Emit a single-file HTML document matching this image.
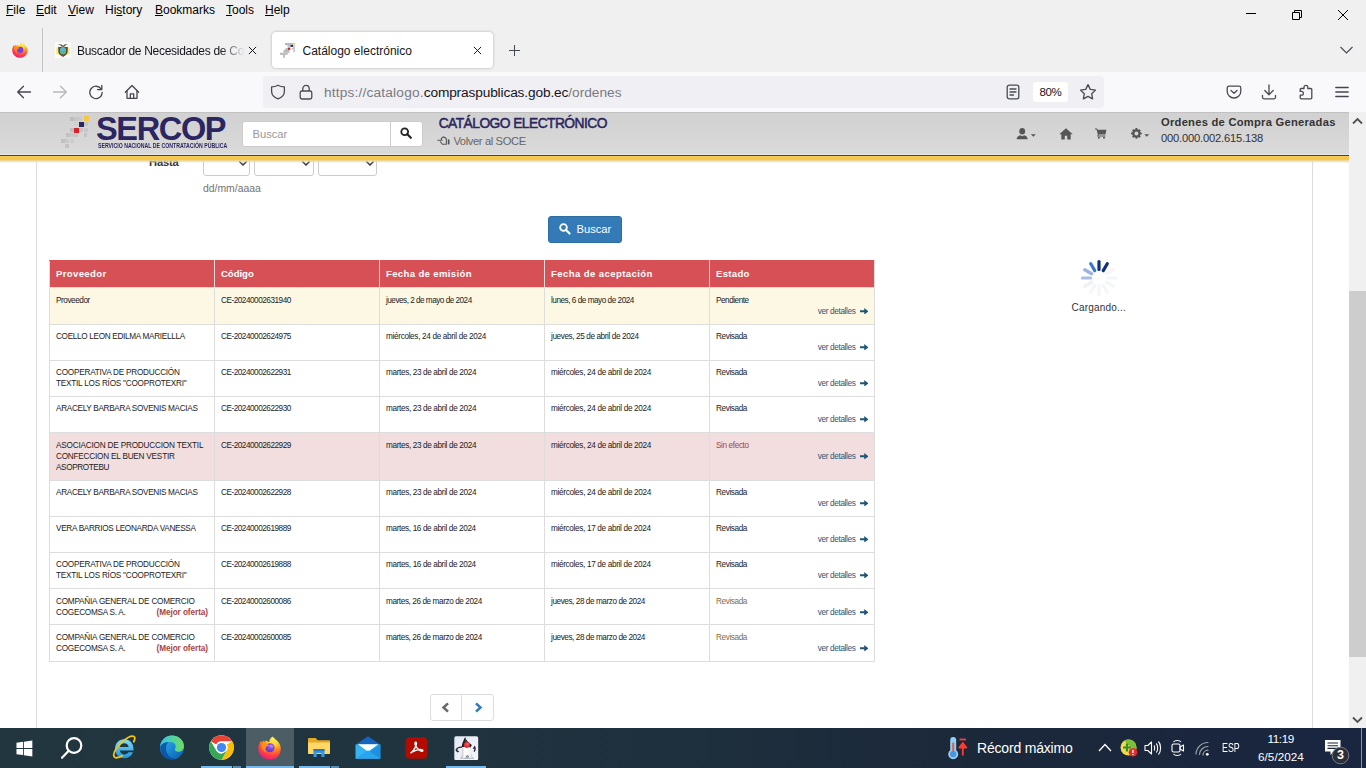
<!DOCTYPE html>
<html lang="es">
<head>
<meta charset="utf-8">
<title>Catálogo electrónico</title>
<style>
*{box-sizing:border-box;margin:0;padding:0}
html,body{width:1366px;height:768px;overflow:hidden;background:#fff;font-family:"Liberation Sans",Arial,sans-serif}
.abs{position:absolute}
#screen{position:relative;width:1366px;height:768px;overflow:hidden;background:#fff}
/* ---------- browser chrome ---------- */
#chrome-top{left:0;top:0;width:1366px;height:72px;background:#f0f0f1}
#menubar span{position:absolute;top:3.400px;font:12px "Liberation Sans",sans-serif;color:#000;white-space:nowrap}
#menubar u{text-decoration:underline;text-underline-offset:1px}
#navbar{left:0;top:72px;width:1366px;height:40px;background:#f9f9fb}
#urlbar{left:263px;top:76px;width:841px;height:32px;background:#f0f0f4;border-radius:4px}
.tabtxt{font:12px "Liberation Sans",sans-serif;color:#15141a;white-space:nowrap}
/* ---------- page ---------- */
#page{left:0;top:112px;width:1349px;height:616px;background:#fff;overflow:hidden}
#hdr{left:0;top:0;width:1349px;height:43px;background:linear-gradient(#d1d1d1,#dadada);border-top:1px solid #c2c2c2;border-bottom:1px solid #e6e7ea}
#hdrline{left:0;top:43px;width:1349px;height:1px;background:#4a4322}
#hdryel{left:0;top:44px;width:1349px;height:4px;background:linear-gradient(#f8d060,#f5c444 40%,#f6c84e)}
#hdrsh{left:0;top:48px;width:1349px;height:3px;background:linear-gradient(rgba(236,208,128,1),rgba(228,216,178,.7) 50%,rgba(255,255,255,0))}
#panel{left:36px;top:49px;width:1277px;height:570px;border-left:1px solid #ddd;border-right:1px solid #ddd;background:#fff}
/* table */
#tbl{left:49px;top:148px;width:825px;border-collapse:collapse;table-layout:fixed;font-size:8.200px;color:#222}
#tbl th{background:#d65056;color:#fff;font-size:9.6px;font-weight:bold;text-align:left;padding:0 0 2px 6px;height:27px;border:1px solid #ddd;border-top-color:#d65056}
#tbl td{vertical-align:top;padding:7.300px 6px 0 6px;border:1px solid #ddd;line-height:11px;position:relative}
#tbl tr.y td{background:#fcf8e3}
#tbl tr.p td{background:#f2dede}
#tbl tr.k td{padding-top:6.300px}
#tbl tr.k .vd{top:17px}
.vd{position:absolute;right:6px;top:18px;color:#2a567a;font-size:8.200px;white-space:nowrap}
.mo{color:#a94442;font-weight:bold;float:right;letter-spacing:-.06px}
.ar{margin-left:4px;vertical-align:-.4px}
.sel{top:30px;height:34px;border:1px solid #ccc;border-radius:3px;background:#fff}
/* scrollbar */
#sb{left:1349px;top:112px;width:17px;height:616px;background:#f0f0f0}
#sbthumb{left:1349px;top:291px;width:17px;height:366px;background:#cdcdcd}
/* taskbar */
#taskbar{left:0;top:728px;width:1366px;height:40px;background:linear-gradient(to right,#22363f 0,#20343f 30%,#1e2f3d 50%,#1b283a 72%,#1a2540 100%)}
.ul{top:766px;height:2px;background:#76b9ed}
.ul2{top:766px;height:2px;background:#5c8db5}
</style>
</head>
<body>
<div id="screen">
<!--CHROME-->
<div id="chrome-top" class="abs"></div>
<div id="menubar">
<span style="left:6px"><u>F</u>ile</span>
<span style="left:36px"><u>E</u>dit</span>
<span style="left:68px"><u>V</u>iew</span>
<span style="left:105px">Hi<u>s</u>tory</span>
<span style="left:155px"><u>B</u>ookmarks</span>
<span style="left:226px"><u>T</u>ools</span>
<span style="left:265px"><u>H</u>elp</span>
</div>

<!-- window controls -->
<svg class="abs" style="left:1240px;top:4px" width="120" height="22" viewBox="0 0 120 22" fill="none" stroke="#000" stroke-width="1">
 <path d="M6 9.5h10"/>
 <path d="M52.5 8.500h7v7h-7z"/><path d="M54.5 8.500v-2h7v7h-2"/>
 <path d="M98 6l10 10M108 6l-10 10"/>
</svg>
<!-- firefox view -->
<svg class="abs" style="left:12px;top:42px" width="16" height="16" viewBox="0 0 24 24">
 <defs><radialGradient id="ffg" cx="68%" cy="8%" r="100%"><stop offset="0" stop-color="#fff45a"/><stop offset=".28" stop-color="#ffd12f"/><stop offset=".5" stop-color="#ff8a1e"/><stop offset=".75" stop-color="#ff3d45"/><stop offset="1" stop-color="#e8178a"/></radialGradient></defs>
 <path d="M15 .3c1.500 2.200 4.500 3.700 6.500 6.700 2 3 2.300 6.500 1 10C20.800 21.300 16.800 23.800 12 23.800 5.500 23.800.3 18.800.3 12.500c0-3 1.200-6 3-7.900.2.700.6 1.300 1.100 1.800.2-.9.600-1.600 1.200-2.100.4.700 1 1.300 1.800 1.600-.1-.9.100-1.500.5-1.900.9.800 2.300 1.600 3.600 1.800C11.500 3.500 13 1.500 15 .3z" fill="url(#ffg)"/>
 <circle cx="12.300" cy="11.800" r="4.800" fill="#7a3ee6"/>
 <path d="M3.600 6.600c2.600-.8 5.900.3 8 3.400-1.800-.4-3.400.4-4.100 1.900-.7 1.600-.2 3.300 1 4.400-3.400-.6-5.500-4.600-4.900-9.700z" fill="#ff8f1a"/>
</svg>
<div class="abs" style="left:42px;top:28px;width:1px;height:44px;background:#c4c4c8"></div>
<!-- tab 1 -->
<svg class="abs" style="left:55px;top:42px" width="16" height="16" viewBox="0 0 16 16">
 <rect width="16" height="16" fill="#fbfbf9"/>
 <path d="M1.200 5.500h3v7h-3zM11.800 5.500h3v7h-3z" fill="#f6e96a" opacity=".85"/>
 <path d="M8 3.800C6.800 2.300 4.800 1.600 2.800 2c1.700.4 2.900 1.200 3.600 2.300zM8 3.800c1.200-1.500 3.200-2.200 5.200-1.800-1.700.4-2.900 1.200-3.600 2.300z" fill="#4a4a40"/>
 <path d="M3.300 4.800c1.500.5 3 .3 4.700-.8 1.700 1.100 3.200 1.300 4.700.8v4.700c0 2.300-1.900 4-4.700 5.300-2.800-1.300-4.700-3-4.700-5.300z" fill="#5b4630"/>
 <ellipse cx="8" cy="8.600" rx="3.100" ry="3.500" fill="#59b7c9"/>
 <path d="M4.900 9a3.100 3.500 0 0 0 6.200 0z" fill="#5fb58a"/>
 <path d="M6.800 13.300L8 15l1.200-1.700z" fill="#c8382e"/>
</svg>
<div class="abs tabtxt" id="t1txt" style="letter-spacing:-.29px;left:77px;top:43.700px;width:168px;height:17px;overflow:hidden;-webkit-mask-image:linear-gradient(to right,#000 0,#000 143px,transparent 168px);mask-image:linear-gradient(to right,#000 0,#000 143px,transparent 168px)">Buscador de Necesidades de Co</div>
<svg class="abs" style="left:248px;top:46px" width="9" height="9" viewBox="0 0 10 10" stroke="#15141a" stroke-width="1.100" fill="none"><path d="M1 1l8 8M9 1l-8 8"/></svg>
<!-- tab 2 active -->
<div class="abs" style="left:272px;top:32px;width:221px;height:36px;background:#fff;border-radius:4px;box-shadow:0 0 3px rgba(0,0,0,.28)"></div>
<svg class="abs" style="left:280px;top:42px" width="16" height="16" viewBox="0 0 16 16">
 <rect x="5" y="1" width="8" height="2.200" fill="#b7b7b9"/><rect x="13" y="1" width="2.200" height="2.600" fill="#e2dc93"/>
 <rect x="7.500" y="3" width="3" height="2.800" fill="#c4c4c6"/><rect x="10.500" y="3" width="2.600" height="1.900" fill="#2b2560"/><rect x="13" y="3.500" width="2" height="2.500" fill="#c9c9cb"/>
 <rect x="11.500" y="5.800" width="3.500" height="1.800" fill="#c6c6c8"/><rect x="13.200" y="7.500" width="1.800" height="2.700" fill="#c8c8ca"/>
 <rect x="8" y="5.800" width="2.200" height="2.200" fill="#d8232a"/><rect x="5.500" y="6" width="2.500" height="2" fill="#bdbdbf"/>
 <rect x="3.500" y="7.800" width="6" height="3" fill="#b9b9bb"/><rect x="0" y="10.800" width="7.600" height="2.100" fill="#bcbcbe"/><rect x="3" y="12.900" width="2.100" height="2.900" fill="#c0c0c2"/>
</svg>
<div class="abs tabtxt" id="t2txt" style="left:302.500px;top:43.700px">Catálogo electrónico</div>
<svg class="abs" style="left:472.500px;top:46px" width="9" height="9" viewBox="0 0 10 10" stroke="#15141a" stroke-width="1.100" fill="none"><path d="M1 1l8 8M9 1l-8 8"/></svg>
<svg class="abs" style="left:508px;top:44px" width="13" height="13" viewBox="0 0 13 13" stroke="#4a4a52" stroke-width="1.050" fill="none"><path d="M6.500 1v11M1 6.500h11"/></svg>
<svg class="abs" style="left:1339px;top:45px" width="15" height="10" viewBox="0 0 15 10" stroke="#4a4a52" stroke-width="1.150" fill="none"><path d="M1.500 2l6 6 6-6"/></svg>

<!--NAV-->

<div id="navbar" class="abs"></div>
<div id="urlbar" class="abs"></div>
<!-- back fwd reload home -->
<svg class="abs" style="left:16px;top:84px" width="16" height="16" viewBox="0 0 16 16" stroke="#45454d" stroke-width="1.300" fill="none" stroke-linecap="round" stroke-linejoin="round"><path d="M14.500 8H1.800M7.500 2.200L1.700 8l5.800 5.800"/></svg>
<svg class="abs" style="left:52px;top:84px" width="16" height="16" viewBox="0 0 16 16" stroke="#b9b9bd" stroke-width="1.400" fill="none" stroke-linecap="round" stroke-linejoin="round"><path d="M1.500 8h12.700M8.500 2.200L14.300 8l-5.800 5.800"/></svg>
<svg class="abs" style="left:88px;top:84px" width="16" height="16" viewBox="0 0 16 16" stroke="#45454d" stroke-width="1.300" fill="none" stroke-linecap="round" stroke-linejoin="round"><path d="M13.300 5.200A6.200 6.200 0 1 0 14.200 8.500"/><path d="M13.800 1.300v4.300H9.500" /></svg>
<svg class="abs" style="left:124px;top:84px" width="16" height="16" viewBox="0 0 16 16" stroke="#45454d" stroke-width="1.300" fill="none" stroke-linecap="round" stroke-linejoin="round"><path d="M1.300 8.200L8 1.500l6.700 6.700"/><path d="M3 7v7.300h10V7"/><path d="M6.300 14.300V9.800h3.400v4.500"/></svg>
<!-- shield lock -->
<svg class="abs" style="left:270px;top:84px" width="16" height="16" viewBox="0 0 16 16" stroke="#4a4a52" stroke-width="1.300" fill="none" stroke-linejoin="round"><path d="M8 1.200C6 2.300 3.800 2.800 1.600 2.800v4.400c0 3.500 2.600 6.300 6.400 7.600 3.800-1.300 6.400-4.100 6.400-7.600V2.800C12.200 2.800 10 2.300 8 1.200z"/></svg>
<svg class="abs" style="left:298px;top:84px" width="16" height="16" viewBox="0 0 16 16" stroke="#4a4a52" stroke-width="1.300" fill="none" stroke-linejoin="round"><rect x="2.200" y="7" width="11.600" height="8" rx="1.800"/><path d="M4.800 7V4.600a3.200 3.200 0 0 1 6.400 0V7"/></svg>
<div class="abs" id="urltxt" style="left:324px;top:85.300px;font:13.700px 'Liberation Sans',sans-serif;color:#7a7a82;white-space:nowrap;letter-spacing:0"><span style="letter-spacing:.18px">https://catalogo.</span><span style="color:#15141a;letter-spacing:-.14px">compraspublicas.gob.ec</span>/ordenes</div>
<!-- reader, zoom, star -->
<svg class="abs" style="left:1005px;top:84px" width="16" height="16" viewBox="0 0 16 16" stroke="#4a4a52" stroke-width="1.300" fill="none" stroke-linecap="round"><rect x="2.200" y="1.200" width="11.600" height="13.600" rx="2"/><path d="M5 5h6M5 8h6M5 11h3.500"/></svg>
<div class="abs" style="left:1033px;top:82px;width:35px;height:20px;background:#fff;border-radius:3px;font:11.500px 'Liberation Sans',sans-serif;color:#15141a;text-align:center;line-height:21px;letter-spacing:-.34px">80%</div>
<svg class="abs" style="left:1079px;top:83px" width="18" height="18" viewBox="0 0 18 18" stroke="#4a4a52" stroke-width="1.300" fill="none" stroke-linejoin="round"><path d="M9 1.600l2.300 4.800 5.200.7-3.800 3.600.9 5.200L9 13.400l-4.600 2.500.9-5.200L1.500 7.100l5.200-.7z"/></svg>
<!-- pocket, download, ext, menu -->
<svg class="abs" style="left:1226px;top:84px" width="16" height="16" viewBox="0 0 16 16" stroke="#4a4a52" stroke-width="1.300" fill="none" stroke-linecap="round" stroke-linejoin="round"><path d="M3 2.200h10a1.800 1.800 0 0 1 1.800 1.800v3.200a6.800 6.800 0 0 1-13.600 0V4A1.800 1.800 0 0 1 3 2.200z"/><path d="M5 6.500l3 2.800 3-2.800"/></svg>
<svg class="abs" style="left:1261px;top:84px" width="16" height="16" viewBox="0 0 16 16" stroke="#4a4a52" stroke-width="1.300" fill="none" stroke-linecap="round" stroke-linejoin="round"><path d="M8 1v9.500M3.800 6.500L8 10.700l4.200-4.200"/><path d="M1.500 11.500v1.800a1.500 1.500 0 0 0 1.500 1.500h10a1.500 1.500 0 0 0 1.500-1.500v-1.800"/></svg>
<svg class="abs" style="left:1298px;top:84px" width="16" height="16" viewBox="0 0 16 16" stroke="#4a4a52" stroke-width="1.300" fill="none" stroke-linejoin="round"><path d="M6 3.200a1.900 1.900 0 0 1 3.800 0V4.500h3a1 1 0 0 1 1 1v8.300a1 1 0 0 1-1 1H3.200a1 1 0 0 1-1-1v-2.600h1.300a1.900 1.900 0 0 0 0-3.800H2.200V5.500a1 1 0 0 1 1-1H6z"/></svg>
<svg class="abs" style="left:1334px;top:84px" width="16" height="16" viewBox="0 0 16 16" stroke="#45454d" stroke-width="1.300" fill="none" stroke-linecap="round"><path d="M1.800 3.500h12.400M1.800 8h12.400M1.800 12.500h12.400"/></svg>

<!--PAGE-->
<div id="page" class="abs">
  <div id="panel" class="abs"></div>
  
<div class="abs" style="left:149px;top:44px;letter-spacing:-.17px;font:bold 11.200px 'Liberation Sans',sans-serif;color:#333">Hasta</div>
<div class="abs sel" style="left:203px;width:47px"></div>
<div class="abs sel" style="left:254px;width:60px"></div>
<div class="abs sel" style="left:318px;width:59px"></div>
<svg class="abs" style="left:237.5px;top:47.500px" width="10" height="7" viewBox="0 0 10 7" fill="none" stroke="#3a3a3a" stroke-width="1.500"><path d="M1.200 1.200L5 5l3.800-3.800"/></svg>
<svg class="abs" style="left:300.7px;top:47.500px" width="10" height="7" viewBox="0 0 10 7" fill="none" stroke="#3a3a3a" stroke-width="1.500"><path d="M1.200 1.200L5 5l3.800-3.800"/></svg>
<svg class="abs" style="left:364.5px;top:47.500px" width="10" height="7" viewBox="0 0 10 7" fill="none" stroke="#3a3a3a" stroke-width="1.500"><path d="M1.200 1.200L5 5l3.800-3.800"/></svg>
<div class="abs" style="left:203px;top:70.500px;font:10.400px 'Liberation Sans',sans-serif;color:#737373">dd/mm/aaaa</div>
<div class="abs" style="left:548px;top:104px;width:74px;height:27px;background:#337ab7;border:1px solid #2e6da4;border-radius:3px"></div>
<svg class="abs" style="left:559px;top:111px" width="11.500" height="11.500" viewBox="0 0 12 12" fill="none" stroke="#fff"><circle cx="4.700" cy="4.700" r="3.500" stroke-width="1.900"/><path d="M7.300 7.300l3.700 3.700" stroke-width="2.200" stroke-linecap="round"/></svg>
<div class="abs" style="left:576.500px;top:111px;font:11.200px 'Liberation Sans',sans-serif;color:#fff">Buscar</div>

  <table id="tbl" class="abs">
<colgroup><col style="width:165px"><col style="width:165px"><col style="width:165px"><col style="width:165px"><col style="width:165px"></colgroup>
<tr><th><span style="letter-spacing:0.337px">Proveedor</span></th><th><span style="letter-spacing:-0.058px">Código</span></th><th><span style="letter-spacing:0.337px">Fecha de emisión</span></th><th><span style="letter-spacing:0.386px">Fecha de aceptación</span></th><th><span style="letter-spacing:0.283px">Estado</span></th></tr>
<tr class="y" style="height:37px"><td><span style="letter-spacing:-0.431px">Proveedor</span></td><td><span style="letter-spacing:-0.474px">CE-20240002631940</span></td><td><span style="letter-spacing:-0.505px">jueves, 2 de mayo de 2024</span></td><td><span style="letter-spacing:-0.472px">lunes, 6 de mayo de 2024</span></td><td><span style="letter-spacing:-0.466px">Pendiente</span><span class="vd"><span style="letter-spacing:-0.348px">ver detalles</span><svg class="ar" width="8.500" height="6.600" viewBox="0 0 9 7"><path d="M0 2.400h4.500V0L9 3.500 4.500 7V4.600H0z" fill="#1f5575"/></svg></span></td></tr>
<tr class="k" style="height:36px"><td><span style="letter-spacing:-0.308px">COELLO LEON EDILMA MARIELLLA</span></td><td><span style="letter-spacing:-0.474px">CE-20240002624975</span></td><td><span style="letter-spacing:-0.323px">miércoles, 24 de abril de 2024</span></td><td><span style="letter-spacing:-0.394px">jueves, 25 de abril de 2024</span></td><td><span style="letter-spacing:-0.393px">Revisada</span><span class="vd"><span style="letter-spacing:-0.348px">ver detalles</span><svg class="ar" width="8.500" height="6.600" viewBox="0 0 9 7"><path d="M0 2.400h4.500V0L9 3.500 4.500 7V4.600H0z" fill="#1f5575"/></svg></span></td></tr>
<tr class="k" style="height:36px"><td><span style="letter-spacing:-0.226px">COOPERATIVA DE PRODUCCIÓN</span><br><span style="letter-spacing:-0.224px">TEXTIL LOS RÍOS "COOPROTEXRI"</span></td><td><span style="letter-spacing:-0.474px">CE-20240002622931</span></td><td><span style="letter-spacing:-0.355px">martes, 23 de abril de 2024</span></td><td><span style="letter-spacing:-0.323px">miércoles, 24 de abril de 2024</span></td><td><span style="letter-spacing:-0.393px">Revisada</span><span class="vd"><span style="letter-spacing:-0.348px">ver detalles</span><svg class="ar" width="8.500" height="6.600" viewBox="0 0 9 7"><path d="M0 2.400h4.500V0L9 3.500 4.500 7V4.600H0z" fill="#1f5575"/></svg></span></td></tr>
<tr class="k" style="height:36px"><td><span style="letter-spacing:-0.306px">ARACELY BARBARA SOVENIS MACIAS</span></td><td><span style="letter-spacing:-0.474px">CE-20240002622930</span></td><td><span style="letter-spacing:-0.355px">martes, 23 de abril de 2024</span></td><td><span style="letter-spacing:-0.323px">miércoles, 24 de abril de 2024</span></td><td><span style="letter-spacing:-0.393px">Revisada</span><span class="vd"><span style="letter-spacing:-0.348px">ver detalles</span><svg class="ar" width="8.500" height="6.600" viewBox="0 0 9 7"><path d="M0 2.400h4.500V0L9 3.500 4.500 7V4.600H0z" fill="#1f5575"/></svg></span></td></tr>
<tr class="p" style="height:48px"><td><span style="letter-spacing:-0.189px">ASOCIACION DE PRODUCCION TEXTIL</span><br><span style="letter-spacing:-0.208px">CONFECCION EL BUEN VESTIR</span><br><span style="letter-spacing:-0.388px">ASOPROTEBU</span></td><td><span style="letter-spacing:-0.474px">CE-20240002622929</span></td><td><span style="letter-spacing:-0.355px">martes, 23 de abril de 2024</span></td><td><span style="letter-spacing:-0.323px">miércoles, 24 de abril de 2024</span></td><td><span style="letter-spacing:-0.372px;color:#a94442">Sin efecto</span><span class="vd"><span style="letter-spacing:-0.348px">ver detalles</span><svg class="ar" width="8.500" height="6.600" viewBox="0 0 9 7"><path d="M0 2.400h4.500V0L9 3.500 4.500 7V4.600H0z" fill="#1f5575"/></svg></span></td></tr>
<tr class="k" style="height:36px"><td><span style="letter-spacing:-0.306px">ARACELY BARBARA SOVENIS MACIAS</span></td><td><span style="letter-spacing:-0.474px">CE-20240002622928</span></td><td><span style="letter-spacing:-0.355px">martes, 23 de abril de 2024</span></td><td><span style="letter-spacing:-0.323px">miércoles, 24 de abril de 2024</span></td><td><span style="letter-spacing:-0.393px">Revisada</span><span class="vd"><span style="letter-spacing:-0.348px">ver detalles</span><svg class="ar" width="8.500" height="6.600" viewBox="0 0 9 7"><path d="M0 2.400h4.500V0L9 3.500 4.500 7V4.600H0z" fill="#1f5575"/></svg></span></td></tr>
<tr class="k" style="height:36px"><td><span style="letter-spacing:-0.293px">VERA BARRIOS LEONARDA VANESSA</span></td><td><span style="letter-spacing:-0.474px">CE-20240002619889</span></td><td><span style="letter-spacing:-0.366px">martes, 16 de abril de 2024</span></td><td><span style="letter-spacing:-0.333px">miércoles, 17 de abril de 2024</span></td><td><span style="letter-spacing:-0.393px">Revisada</span><span class="vd"><span style="letter-spacing:-0.348px">ver detalles</span><svg class="ar" width="8.500" height="6.600" viewBox="0 0 9 7"><path d="M0 2.400h4.500V0L9 3.500 4.500 7V4.600H0z" fill="#1f5575"/></svg></span></td></tr>
<tr class="k" style="height:36px"><td><span style="letter-spacing:-0.226px">COOPERATIVA DE PRODUCCIÓN</span><br><span style="letter-spacing:-0.224px">TEXTIL LOS RÍOS "COOPROTEXRI"</span></td><td><span style="letter-spacing:-0.474px">CE-20240002619888</span></td><td><span style="letter-spacing:-0.366px">martes, 16 de abril de 2024</span></td><td><span style="letter-spacing:-0.333px">miércoles, 17 de abril de 2024</span></td><td><span style="letter-spacing:-0.393px">Revisada</span><span class="vd"><span style="letter-spacing:-0.348px">ver detalles</span><svg class="ar" width="8.500" height="6.600" viewBox="0 0 9 7"><path d="M0 2.400h4.500V0L9 3.500 4.500 7V4.600H0z" fill="#1f5575"/></svg></span></td></tr>
<tr class="" style="height:36px"><td><span style="letter-spacing:-0.213px">COMPAÑIA GENERAL DE COMERCIO</span><br><span style="letter-spacing:-0.244px">COGECOMSA S. A.</span> <span class="mo">(Mejor oferta)</span></td><td><span style="letter-spacing:-0.474px">CE-20240002600086</span></td><td><span style="letter-spacing:-0.41px">martes, 26 de marzo de 2024</span></td><td><span style="letter-spacing:-0.43px">jueves, 28 de marzo de 2024</span></td><td><span style="letter-spacing:-0.393px;color:#8a6d3b">Revisada</span><span class="vd"><span style="letter-spacing:-0.348px">ver detalles</span><svg class="ar" width="8.500" height="6.600" viewBox="0 0 9 7"><path d="M0 2.400h4.500V0L9 3.500 4.500 7V4.600H0z" fill="#1f5575"/></svg></span></td></tr>
<tr class="" style="height:37px"><td><span style="letter-spacing:-0.213px">COMPAÑIA GENERAL DE COMERCIO</span><br><span style="letter-spacing:-0.244px">COGECOMSA S. A.</span> <span class="mo">(Mejor oferta)</span></td><td><span style="letter-spacing:-0.474px">CE-20240002600085</span></td><td><span style="letter-spacing:-0.41px">martes, 26 de marzo de 2024</span></td><td><span style="letter-spacing:-0.43px">jueves, 28 de marzo de 2024</span></td><td><span style="letter-spacing:-0.393px;color:#8a6d3b">Revisada</span><span class="vd"><span style="letter-spacing:-0.348px">ver detalles</span><svg class="ar" width="8.500" height="6.600" viewBox="0 0 9 7"><path d="M0 2.400h4.500V0L9 3.500 4.500 7V4.600H0z" fill="#1f5575"/></svg></span></td></tr>
</table>
  
<svg class="abs" style="left:1077px;top:144px" width="44" height="44" viewBox="-22 -22 44 44" stroke-width="3.200" stroke-linecap="round">
 <g id="spk">
 <line x1="0" y1="-8.500" x2="0" y2="-16.500" stroke="#0d2f7e"/>
 <line x1="0" y1="-8.500" x2="0" y2="-16.500" stroke="#102f7a" transform="rotate(30)"/>
 <line x1="0" y1="-8.500" x2="0" y2="-16.500" stroke="#f4f6fa" transform="rotate(60)"/>
 <line x1="0" y1="-8.500" x2="0" y2="-16.500" stroke="#f4f6fa" transform="rotate(90)"/>
 <line x1="0" y1="-8.500" x2="0" y2="-16.500" stroke="#f4f6fa" transform="rotate(120)"/>
 <line x1="0" y1="-8.500" x2="0" y2="-16.500" stroke="#f4f6fa" transform="rotate(150)"/>
 <line x1="0" y1="-8.500" x2="0" y2="-16.500" stroke="#f4f6fa" transform="rotate(180)"/>
 <line x1="0" y1="-8.500" x2="0" y2="-16.500" stroke="#f4f6fa" transform="rotate(210)"/>
 <line x1="0" y1="-8.500" x2="0" y2="-16.500" stroke="#eef1f8" transform="rotate(240)"/>
 <line x1="0" y1="-8.500" x2="0" y2="-16.500" stroke="#a9bde6" transform="rotate(270)"/>
 <line x1="0" y1="-8.500" x2="0" y2="-16.500" stroke="#9bb3e0" transform="rotate(300)"/>
 <line x1="0" y1="-8.500" x2="0" y2="-16.500" stroke="#3f74cf" transform="rotate(330)"/>
 </g>
</svg>
<div class="abs" id="cargando" style="left:1071.500px;top:190px;font:10px 'Liberation Sans',sans-serif;color:#333;letter-spacing:.2px">Cargando...</div>

  
<div class="abs" style="left:430px;top:582px;width:32px;height:27px;border:1px solid #ddd;border-radius:3px 0 0 3px;background:#fff"></div>
<div class="abs" style="left:461px;top:582px;width:33px;height:27px;border:1px solid #ddd;border-radius:0 3px 3px 0;background:#fff"></div>
<svg class="abs" style="left:441px;top:589.500px" width="9" height="11" viewBox="0 0 9 11" fill="none" stroke="#686868" stroke-width="2.500"><path d="M7 1.300L2.500 5.500 7 9.700"/></svg>
<svg class="abs" style="left:474px;top:589.500px" width="9" height="11" viewBox="0 0 9 11" fill="none" stroke="#337ab7" stroke-width="2.500"><path d="M2 1.300L6.500 5.500 2 9.700"/></svg>

  <div id="hdr" class="abs"></div>
  <div id="hdrline" class="abs"></div>
  <div id="hdryel" class="abs"></div>
  <div id="hdrsh" class="abs"></div>
  
<!-- logo -->
<svg class="abs" style="left:60px;top:4px" width="30" height="33" viewBox="0 0 30 33" shape-rendering="crispEdges">
 <g fill="#bdbdbd">
 <rect x="10" y="1" width="4" height="4"/><rect x="14" y="1" width="4" height="4" fill="#c6c6c6"/><rect x="18" y="1" width="4" height="4" fill="#c9c9c9"/>
 <rect x="14" y="6" width="4" height="4" fill="#cfcfcf"/><rect x="24" y="6" width="4" height="4" fill="#c4c4c4"/>
 <rect x="10" y="12" width="4" height="4"/><rect x="19" y="12" width="4" height="4" fill="#c3c3c3"/><rect x="24" y="12" width="4" height="4" fill="#c8c8c8"/>
 <rect x="6" y="17" width="4" height="4" fill="#c2c2c2"/><rect x="10" y="17" width="4" height="4" fill="#c9c9c9"/><rect x="14" y="17" width="4" height="4" fill="#c6c6c6"/><rect x="24" y="17" width="3" height="4" fill="#c4c4c4"/>
 <rect x="1" y="23" width="4" height="4" fill="#c0c0c0"/><rect x="5" y="23" width="4" height="4" fill="#c9c9c9"/><rect x="10" y="23" width="4" height="4" fill="#cdcdcd"/>
 <rect x="5" y="28" width="4" height="4" fill="#c3c3c3"/>
 </g>
 <rect x="24" y="0" width="5" height="5" fill="#f6c544"/><rect x="19" y="6" width="5" height="5" fill="#2b2560"/><rect x="14" y="12" width="5" height="5" fill="#d8232a"/>
</svg>
<div class="abs" id="sercop" style="left:96px;top:-1.400px;font:bold 32.500px 'Liberation Sans',sans-serif;color:#2b2560;letter-spacing:-1.340px;transform-origin:0 0;white-space:nowrap">SERCOP</div>
<div class="abs" id="sercopsub" style="left:97.500px;top:29.500px;font:bold 6.800px 'Liberation Sans',sans-serif;color:#2b2560;white-space:nowrap;transform:scaleX(.763);transform-origin:0 0">SERVICIO NACIONAL DE CONTRATACIÓN PÚBLICA</div>
<!-- search -->
<div class="abs" style="left:242px;top:9px;width:149px;height:26px;background:#fff;border:1px solid #ccc;border-radius:3px 0 0 3px"></div>
<div class="abs" style="left:390px;top:9px;width:33px;height:26px;background:#fff;border:1px solid #ccc;border-radius:0 3px 3px 0"></div>
<div class="abs" style="left:252.500px;top:16px;font:11.200px 'Liberation Sans',sans-serif;color:#999">Buscar</div>
<svg class="abs" style="left:400px;top:15px" width="12" height="12" viewBox="0 0 12 12" fill="none" stroke="#222"><circle cx="4.700" cy="4.700" r="3.400" stroke-width="1.800"/><path d="M7.300 7.300l3.500 3.500" stroke-width="2.100" stroke-linecap="round"/></svg>
<div class="abs" id="cat" style="left:438.700px;top:3.500px;font:13.800px 'Liberation Sans',sans-serif;color:#2b2560;-webkit-text-stroke:.5px #2b2560;white-space:nowrap;letter-spacing:-.55px">CATÁLOGO ELECTRÓNICO</div>
<svg class="abs" style="left:437px;top:23.500px" width="14" height="10" viewBox="0 0 14 10" fill="none" stroke="#5a5a5a" stroke-width="1.100" stroke-linejoin="round" stroke-linecap="round"><path d="M0.700 4.300h4.300L4.200 2.600 6 0.900c1.600.3 3.300 1.400 3.400 2.700V8.300H5.300L3.400 5.700"/><rect x="10.800" y="3.400" width="1.700" height="5" fill="#4a5560" stroke="none"/></svg>
<div class="abs" id="volver" style="left:453.400px;top:22.500px;font:11.200px 'Liberation Sans',sans-serif;color:#666;white-space:nowrap;letter-spacing:-.38px">Volver al SOCE</div>
<!-- right icons -->
<svg class="abs" style="left:1016px;top:16px" width="21" height="12" viewBox="0 0 21 12" fill="#555"><ellipse cx="6.200" cy="3.300" rx="2.900" ry="3.200"/><path d="M0.700 11.200c0-2.300 1.800-3.500 3.600-4l1.900 1 1.900-1c1.800.5 3.600 1.700 3.600 4z"/><path d="M14.800 6.200h5l-2.500 2.500z"/></svg>
<svg class="abs" style="left:1059px;top:16px" width="14" height="12" viewBox="0 0 14 12" fill="#555"><path d="M7 0.300L0.300 6.300h2V11.500h3.500V7.800h2.400v3.700h3.500V6.300h2z"/></svg>
<svg class="abs" style="left:1095px;top:16px" width="12" height="11" viewBox="0 0 13 12" fill="#555"><path d="M0 .5h2.300l.5 1.500H12.500l-1.200 5H4l-.3 1.200h7.600v1.100H2.300L3 6.800 1.600 1.600H0z"/><circle cx="4.200" cy="10.700" r="1.100"/><circle cx="9.800" cy="10.700" r="1.100"/></svg>
<svg class="abs" style="left:1130.500px;top:16px" width="19" height="11.760" viewBox="0 0 21 13" fill="#555"><path d="M6 0l.9.100.3 1.400 1 .5 1.300-.7 1.200 1.200-.7 1.300.4 1 1.500.4v1.700l-1.500.4-.4 1 .7 1.300-1.200 1.200-1.300-.7-1 .4-.4 1.500H5.200l-.4-1.500-1-.4-1.300.7-1.200-1.200.7-1.300-.4-1L0 6.900V5.200l1.500-.4.400-1-.7-1.300L2.400 1.300l1.300.7 1-.5L5.100.1zM6 3.800a2.200 2.200 0 1 0 0 4.400 2.200 2.200 0 0 0 0-4.400z" fill-rule="evenodd"/><path d="M14.700 6.800h5.500l-2.750 2.800z"/></svg>
<div class="abs" id="ocg" style="left:1161px;top:3.500px;font:bold 11.200px 'Liberation Sans',sans-serif;color:#333;white-space:nowrap;letter-spacing:.25px">Ordenes de Compra Generadas</div>
<div class="abs" id="ocn" style="left:1161px;top:20px;font:11.200px 'Liberation Sans',sans-serif;color:#333;white-space:nowrap;letter-spacing:-.19px">000.000.002.615.138</div>

</div>
<!--SCROLLBAR-->
<div id="sb" class="abs"></div>
<div id="sbthumb" class="abs"></div>
<svg class="abs" style="left:1352px;top:117px" width="11" height="8" viewBox="0 0 11 8" fill="none" stroke="#505050" stroke-width="1.800"><path d="M1 6.500L5.500 2 10 6.500"/></svg>
<svg class="abs" style="left:1352px;top:716px" width="11" height="8" viewBox="0 0 11 8" fill="none" stroke="#505050" stroke-width="1.800"><path d="M1 1.500L5.500 6 10 1.500"/></svg>
<!--TASKBAR-->

<div id="taskbar" class="abs"></div>
<!-- active app highlight + underlines -->
<div class="abs" style="left:246px;top:728px;width:48px;height:40px;background:rgba(255,255,255,.2)"></div>
<div class="abs ul" style="left:201px;width:31px"></div><div class="abs ul2" style="left:233px;width:8px"></div>
<div class="abs ul" style="left:246px;width:48px"></div>
<div class="abs ul" style="left:299px;width:31px"></div><div class="abs ul2" style="left:331px;width:8px"></div>
<div class="abs ul" style="left:446px;width:40px"></div>
<!-- windows logo -->
<svg class="abs" style="left:15.500px;top:739.500px" width="17" height="17" viewBox="0 0 18 18" fill="#fff"><path d="M0.500 2.900L7.500 1.900V8.500H0.500zM8.400 1.800L17.300 0.500V8.500H8.400zM0.500 9.400H7.500V16L0.500 15zM8.400 9.400H17.300V17.400L8.400 16.100z"/></svg>
<!-- search -->
<svg class="abs" style="left:60px;top:735px" width="24" height="25" viewBox="0 0 24 25" fill="none" stroke="#fff" stroke-width="2.200" stroke-linecap="round"><circle cx="14" cy="10.500" r="7.300"/><path d="M8.700 15.800L2 22.800"/></svg>
<!-- IE -->
<svg class="abs" style="left:110.500px;top:735px" width="26" height="25" viewBox="0 0 26 25">
 <defs><linearGradient id="ieg" x1="0" y1="0" x2="0" y2="1"><stop offset="0" stop-color="#7fdcfb"/><stop offset="1" stop-color="#1f96dc"/></linearGradient></defs>
 <path d="M13.300 4.300c5.300 0 9.200 4 9.200 9.800v1.400H8.800c.3 2.400 2.100 3.900 4.600 3.900 1.800 0 3.200-.7 4-2.100h4.500c-1.300 3.700-4.500 5.900-8.600 5.900-5.300 0-9.300-3.800-9.300-9.400 0-5.500 4-9.500 9.300-9.500zm-4.400 7.800h8.700c-.3-2.300-2-3.800-4.300-3.800s-4 1.500-4.400 3.800z" fill="url(#ieg)"/>
 <path d="M22.800 6.700c1.200-2.400 1.300-4.300.3-5.100C21.300.2 17 2 12.600 5.600 6 11 1.400 18.300 3.100 21.600c1 1.900 4.300 1.300 8.100-.9" fill="none" stroke="#f5c518" stroke-width="1.800" stroke-linecap="round"/>
</svg>
<!-- Edge -->
<svg class="abs" style="left:159px;top:735px" width="26" height="25" viewBox="0 0 26 25">
 <defs><linearGradient id="edg1" x1="0" y1="0" x2="1" y2="1"><stop offset="0" stop-color="#35c1f1"/><stop offset=".5" stop-color="#1a8ad6"/><stop offset="1" stop-color="#0c59a4"/></linearGradient><linearGradient id="edg2" x1="0" y1="0" x2="1" y2="0"><stop offset="0" stop-color="#36c6e9"/><stop offset="1" stop-color="#6ddc5e"/></linearGradient></defs>
 <circle cx="13" cy="12.500" r="12" fill="url(#edg1)"/>
 <path d="M1.200 11.500C1.800 5.300 6.800.5 13 .5c6.700 0 12 4.800 12 10.800 0 3.400-2.500 5.500-5.500 5.500-2.300 0-3.700-1-3.700-2.200 0-.8.900-1.300.9-3 0-2.500-2.400-4.600-5.600-4.600-4.400 0-8.500 2.800-9.900 4.500z" fill="url(#edg2)"/>
 <path d="M7 13.500c0 5 3.500 9.500 9 10.300-4.700 1.700-11-.3-13.600-5.300C1.200 15.800 1 13 1.400 11 3 8.500 6 7 9.500 7c-1.500 1.500-2.500 3.800-2.500 6.500z" fill="#0b4f9c" opacity=".85"/>
</svg>
<!-- Chrome -->
<svg class="abs" style="left:209px;top:735px" width="25" height="25" viewBox="0 0 24 24">
 <circle cx="12" cy="12" r="11.800" fill="#fff"/>
 <path d="M12 .2A11.800 11.800 0 0 1 22.220 6.100H12a5.900 5.900 0 0 0-5.110 2.950L1.780 6.100A11.800 11.800 0 0 1 12 .2z" fill="#ea4335"/>
 <path d="M22.220 6.100a11.800 11.800 0 0 1-10.200 17.700l5.100-8.850a5.900 5.900 0 0 0 0-5.900z" fill="#fbbc04" transform="rotate(0 12 12)"/>
 <path d="M12.020 23.800A11.800 11.800 0 0 1 1.780 6.100l5.110 8.850a5.900 5.900 0 0 0 5.110 2.950l5.120-2.950z" fill="#34a853"/>
 <circle cx="12" cy="12" r="5.500" fill="#fff"/><circle cx="12" cy="12" r="4.400" fill="#4285f4"/>
</svg>
<!-- Firefox -->
<svg class="abs" style="left:258px;top:735.500px" width="23.500" height="24" viewBox="0 0 24 24">
 <defs><radialGradient id="fxg" cx="68%" cy="8%" r="100%"><stop offset="0" stop-color="#fff45a"/><stop offset=".28" stop-color="#ffd12f"/><stop offset=".5" stop-color="#ff8a1e"/><stop offset=".75" stop-color="#ff3d45"/><stop offset="1" stop-color="#e8178a"/></radialGradient>
 <radialGradient id="fxp" cx="60%" cy="30%" r="75%"><stop offset="0" stop-color="#a55cf5"/><stop offset="1" stop-color="#5a2fd0"/></radialGradient></defs>
 <path d="M15 .3c1.500 2.200 4.500 3.700 6.500 6.700 2 3 2.300 6.500 1 10C20.800 21.300 16.800 23.800 12 23.800 5.500 23.800.3 18.800.3 12.500c0-3 1.200-6 3-7.900.2.700.6 1.300 1.100 1.800.2-.9.600-1.600 1.200-2.100.4.700 1 1.300 1.800 1.600-.1-.9.100-1.500.5-1.900.9.800 2.300 1.600 3.600 1.800C11.500 3.500 13 1.500 15 .3z" fill="url(#fxg)"/>
 <circle cx="12.300" cy="11.800" r="4.600" fill="url(#fxp)"/>
 <path d="M3.600 6.600c2.600-.8 5.900.3 8 3.400-1.800-.4-3.400.4-4.100 1.900-.7 1.600-.2 3.300 1 4.400-3.400-.6-5.500-4.600-4.900-9.700z" fill="#ff8f1a"/>
 <path d="M11.600 10c1.300-.5 2.700-.2 3.500.6-.9-.1-1.600.2-2 .7" fill="none" stroke="#ffd9c0" stroke-width=".7" opacity=".8"/>
</svg>
<!-- Explorer -->
<svg class="abs" style="left:307px;top:737px" width="24" height="21" viewBox="0 0 24 21">
 <path d="M1 2.200C1 1.500 1.500 1 2.200 1h6.500l2 2.200H22c.6 0 1 .4 1 1V9H1z" fill="#e8a820"/>
 <path d="M1 5.500h22V16c0 .6-.4 1-1 1H2c-.6 0-1-.4-1-1z" fill="#ffd766"/>
 <path d="M6.500 12h11v8h-3.200v-4h-4.600v4H6.500z" fill="#3a96dd"/>
 <rect x="6.500" y="12" width="11" height="2.200" fill="#2678c4"/>
</svg>
<!-- Mail -->
<svg class="abs" style="left:355px;top:736px" width="26" height="23" viewBox="0 0 26 23">
 <path d="M13 .3L25.300 8.500H.7z" fill="#1565c0"/>
 <path d="M.7 8.300h24.600v14.400H.7z" fill="#29a9ef"/>
 <path d="M2.800 8.300h20.400L13 15.800z" fill="#fff"/>
 <path d="M25.300 8.500L9.500 19.500l15.800 3.200z" fill="#1e90e2"/>
 <path d="M.7 22.700L13 14.200l12.300 8.500z" fill="#2aa4ec"/>
 <path d="M.7 8.500v14.200L11 15.600z" fill="#35b4f4"/>
</svg>
<!-- Acrobat -->
<svg class="abs" style="left:405px;top:737px" width="23" height="22" viewBox="0 0 23 22">
 <rect x=".5" y=".3" width="22" height="21.400" rx="4.200" fill="#b30b00"/>
 <path d="M6 15.800c1.300-.9 2.900-2.800 4.100-5.200 1-2.100 1.600-4.200 1.200-5.100-.3-.6-1-.5-1.200.1-.3 1.100.5 3.400 1.900 5.300 1.500 2 3.600 3.500 5.200 3.300.9-.1 1-.9.200-1.300-1.800-.7-6.500.1-10 2-.9.500-1.700 1.100-1.400.9z" fill="none" stroke="#fff" stroke-width="1.400" stroke-linejoin="round"/>
</svg>
<!-- Duke icon -->
<svg class="abs" style="left:454px;top:735.500px" width="24.500" height="24.500" viewBox="0 0 24 24">
 <defs><linearGradient id="dkb" x1="0" y1="0" x2="1" y2="1"><stop offset="0" stop-color="#e4e7f4"/><stop offset="1" stop-color="#f6f6fb"/></linearGradient>
 <linearGradient id="dkw" x1="0" y1="0" x2="1" y2="0"><stop offset="0" stop-color="#a9adb5"/><stop offset=".3" stop-color="#ffffff"/><stop offset=".75" stop-color="#f4f4f6"/><stop offset="1" stop-color="#9a9ea6"/></linearGradient></defs>
 <rect x=".3" y=".3" width="23.400" height="23.400" rx="1.600" fill="url(#dkb)"/>
 <path d="M1.500 13.500c.6-2.300 3.500-3.600 6.500-3.200l-.3 1.300c-2.300-.2-4 .7-4.600 2.200.9.300 1.600.9 1.900 1.700l-1.300.7c-.5-.7-1.100-1-1.700-.9z" fill="#2b2f36"/>
 <path d="M20 9.200c1 .8 1.500 2.300 1.300 3.900-.1 1.100-.5 2-1.100 2.600l-1-.8c.5-.7.700-1.600.6-2.600-.4.300-.8.400-1.300.3l.2-1.300c.6 0 1-.7 1.300-2.100z" fill="#2b2f36"/>
 <path d="M10.900 1.200c.9 2.900 3.600 5.400 6.600 7.500l-1.700 3.100H7.400L7.900 8.300c.7-2.600 1.800-5.100 3-7.100z" fill="#1d2024"/><path d="M10.900 1.200c.5 2 1.800 3.800 3.500 5.300l-3.500.5z" fill="#3d5a45" opacity=".7"/>
 <path d="M7.800 10.800h8l1.500 7.700c.2 1.300.9 2.200 1.900 2.900-2 .8-3.700.6-4.800-.5-.9-.9-1.800-.9-2.700-.1-1.400 1.200-3.100 1.300-5.200.3 1-1.500 1.300-2.800 1.300-4.300z" fill="url(#dkw)"/>
 <path d="M6.300 21.200c2 .9 3.800.8 5.300-.5 1-.8 1.900-.8 2.800.1 1.100 1.100 2.800 1.300 4.800.5l.3.900H6z" fill="#8d9199" opacity=".75"/><path d="M11.800 20.300c.3-1 1.500-1.400 2.700-.2" stroke="#44474d" stroke-width=".9" fill="none"/>
 <circle cx="12.600" cy="8.800" r="2.900" fill="#e8323c"/>
 <circle cx="13.300" cy="8" r="1.100" fill="#ff7a7f" opacity=".8"/>
</svg>
<!-- weather -->
<svg class="abs" style="left:947px;top:736px" width="21" height="24" viewBox="0 0 21 24">
 <path d="M3.200 4a3 3 0 0 1 6 0v10.200a5 5 0 1 1-6 0z" fill="#8fd0f7"/>
 <path d="M5.200 6.500h2v8.800a3 3 0 1 1-2 0z" fill="#e05a4f"/>
 <circle cx="6.200" cy="18" r="3" fill="#3a9be8"/>
 <path d="M12.500 3.500h6.500" stroke="#ff3b30" stroke-width="1.800"/>
 <path d="M15.800 19.500V9M12.300 11.500l3.500-4.500 3.500 4.500z" stroke="#ff3b30" stroke-width="1.800" fill="#ff3b30" stroke-linejoin="round"/>
</svg>
<div class="abs" id="rec" style="left:977px;top:739.500px;font:14px 'Liberation Sans',sans-serif;color:#fff;white-space:nowrap;letter-spacing:-.19px">Récord máximo</div>
<svg class="abs" style="left:1098px;top:743px" width="14" height="9" viewBox="0 0 14 9" fill="none" stroke="#fff" stroke-width="1.300"><path d="M1 8l6-6.500L13 8"/></svg>
<!-- tray circle icon -->
<svg class="abs" style="left:1120px;top:739px" width="18" height="18" viewBox="0 0 18 18">
 <circle cx="8.500" cy="8.500" r="8" fill="#f2d94a"/>
 <path d="M8.500 .5a8 8 0 0 1 8 8c0 1-.2 2-.5 2.800C13 9 9 8 4.500 1.600A8 8 0 0 1 8.500.5z" fill="#7bbf3a"/>
 <path d="M3 8.500h8M7 4.500v8" stroke="#2f8f2f" stroke-width="2.200"/>
 <circle cx="13" cy="13.300" r="4.300" fill="#e32b2b"/><path d="M13 10.700v3.200M13 15.100v1" stroke="#fff" stroke-width="1.300"/>
</svg>
<!-- speaker -->
<svg class="abs" style="left:1144px;top:740px" width="18" height="16" viewBox="0 0 18 16" fill="none" stroke="#fff" stroke-width="1.100" stroke-linejoin="round"><path d="M1 5.500h2.800L7.500 2v12L3.800 10.500H1z"/><path d="M10 5.500c.9.700.9 4.300 0 5M12.200 3.500c1.900 1.700 1.900 7.300 0 9M14.400 1.500c2.900 2.800 2.900 10.200 0 13"/></svg>
<!-- meet now -->
<svg class="abs" style="left:1171px;top:739px" width="14" height="18" viewBox="0 0 14 18" fill="none" stroke="#fff" stroke-width="1.100" stroke-linejoin="round"><rect x="1" y="5" width="8" height="8" rx="1.500"/><path d="M9 8l3.500-2v6L9 10z"/><path d="M2.500 3c1.500-2 6-2 7.500 0M2.500 15c1.500 2 6 2 7.500 0"/></svg>
<!-- wifi -->
<svg class="abs" style="left:1195px;top:741px" width="15" height="15" viewBox="0 0 15 15" fill="none" stroke="#9aa3ad" stroke-width="1.200" stroke-linecap="round"><path d="M1 13A12 12 0 0 1 13 1.500"/><path d="M4.500 13.500A8.500 8.500 0 0 1 13 5.500"/><path d="M8 14a5 5 0 0 1 5-4.800"/><circle cx="12.300" cy="13.300" r="1.400" fill="#fff" stroke="none"/></svg>
<div class="abs" id="esp" style="left:1221.500px;top:741px;font:12px 'Liberation Sans',sans-serif;color:#fff;white-space:nowrap;transform:scaleX(.74);transform-origin:0 0">ESP</div>
<div class="abs" id="clk" style="left:1267.500px;top:732px;font:11.700px 'Liberation Sans',sans-serif;color:#fff;white-space:nowrap;letter-spacing:-.4px">11:19</div>
<div class="abs" id="dat" style="left:1258px;top:750px;font:11.700px 'Liberation Sans',sans-serif;color:#fff;white-space:nowrap;letter-spacing:.05px">6/5/2024</div>
<!-- notifications -->
<svg class="abs" style="left:1324px;top:739px" width="26" height="26" viewBox="0 0 26 26">
 <path d="M1 1h15.500v11.500H9.500L6.500 16v-3.500H1z" fill="#fff"/>
 <path d="M3.500 4h10.500M3.500 6.700h10.500M3.500 9.400h10.500" stroke="#1b2838" stroke-width="1.100"/>
 <circle cx="16.500" cy="16.500" r="8.300" fill="#2a2f38" stroke="#7d8590" stroke-width=".9"/>
</svg>
<div class="abs" style="left:1336px;top:748px;width:9px;font:bold 12.500px 'Liberation Sans',sans-serif;color:#fff;text-align:center">3</div>
<div class="abs" style="left:1361px;top:728px;width:1px;height:40px;background:#8b939c"></div>

</div>
</body>
</html>
